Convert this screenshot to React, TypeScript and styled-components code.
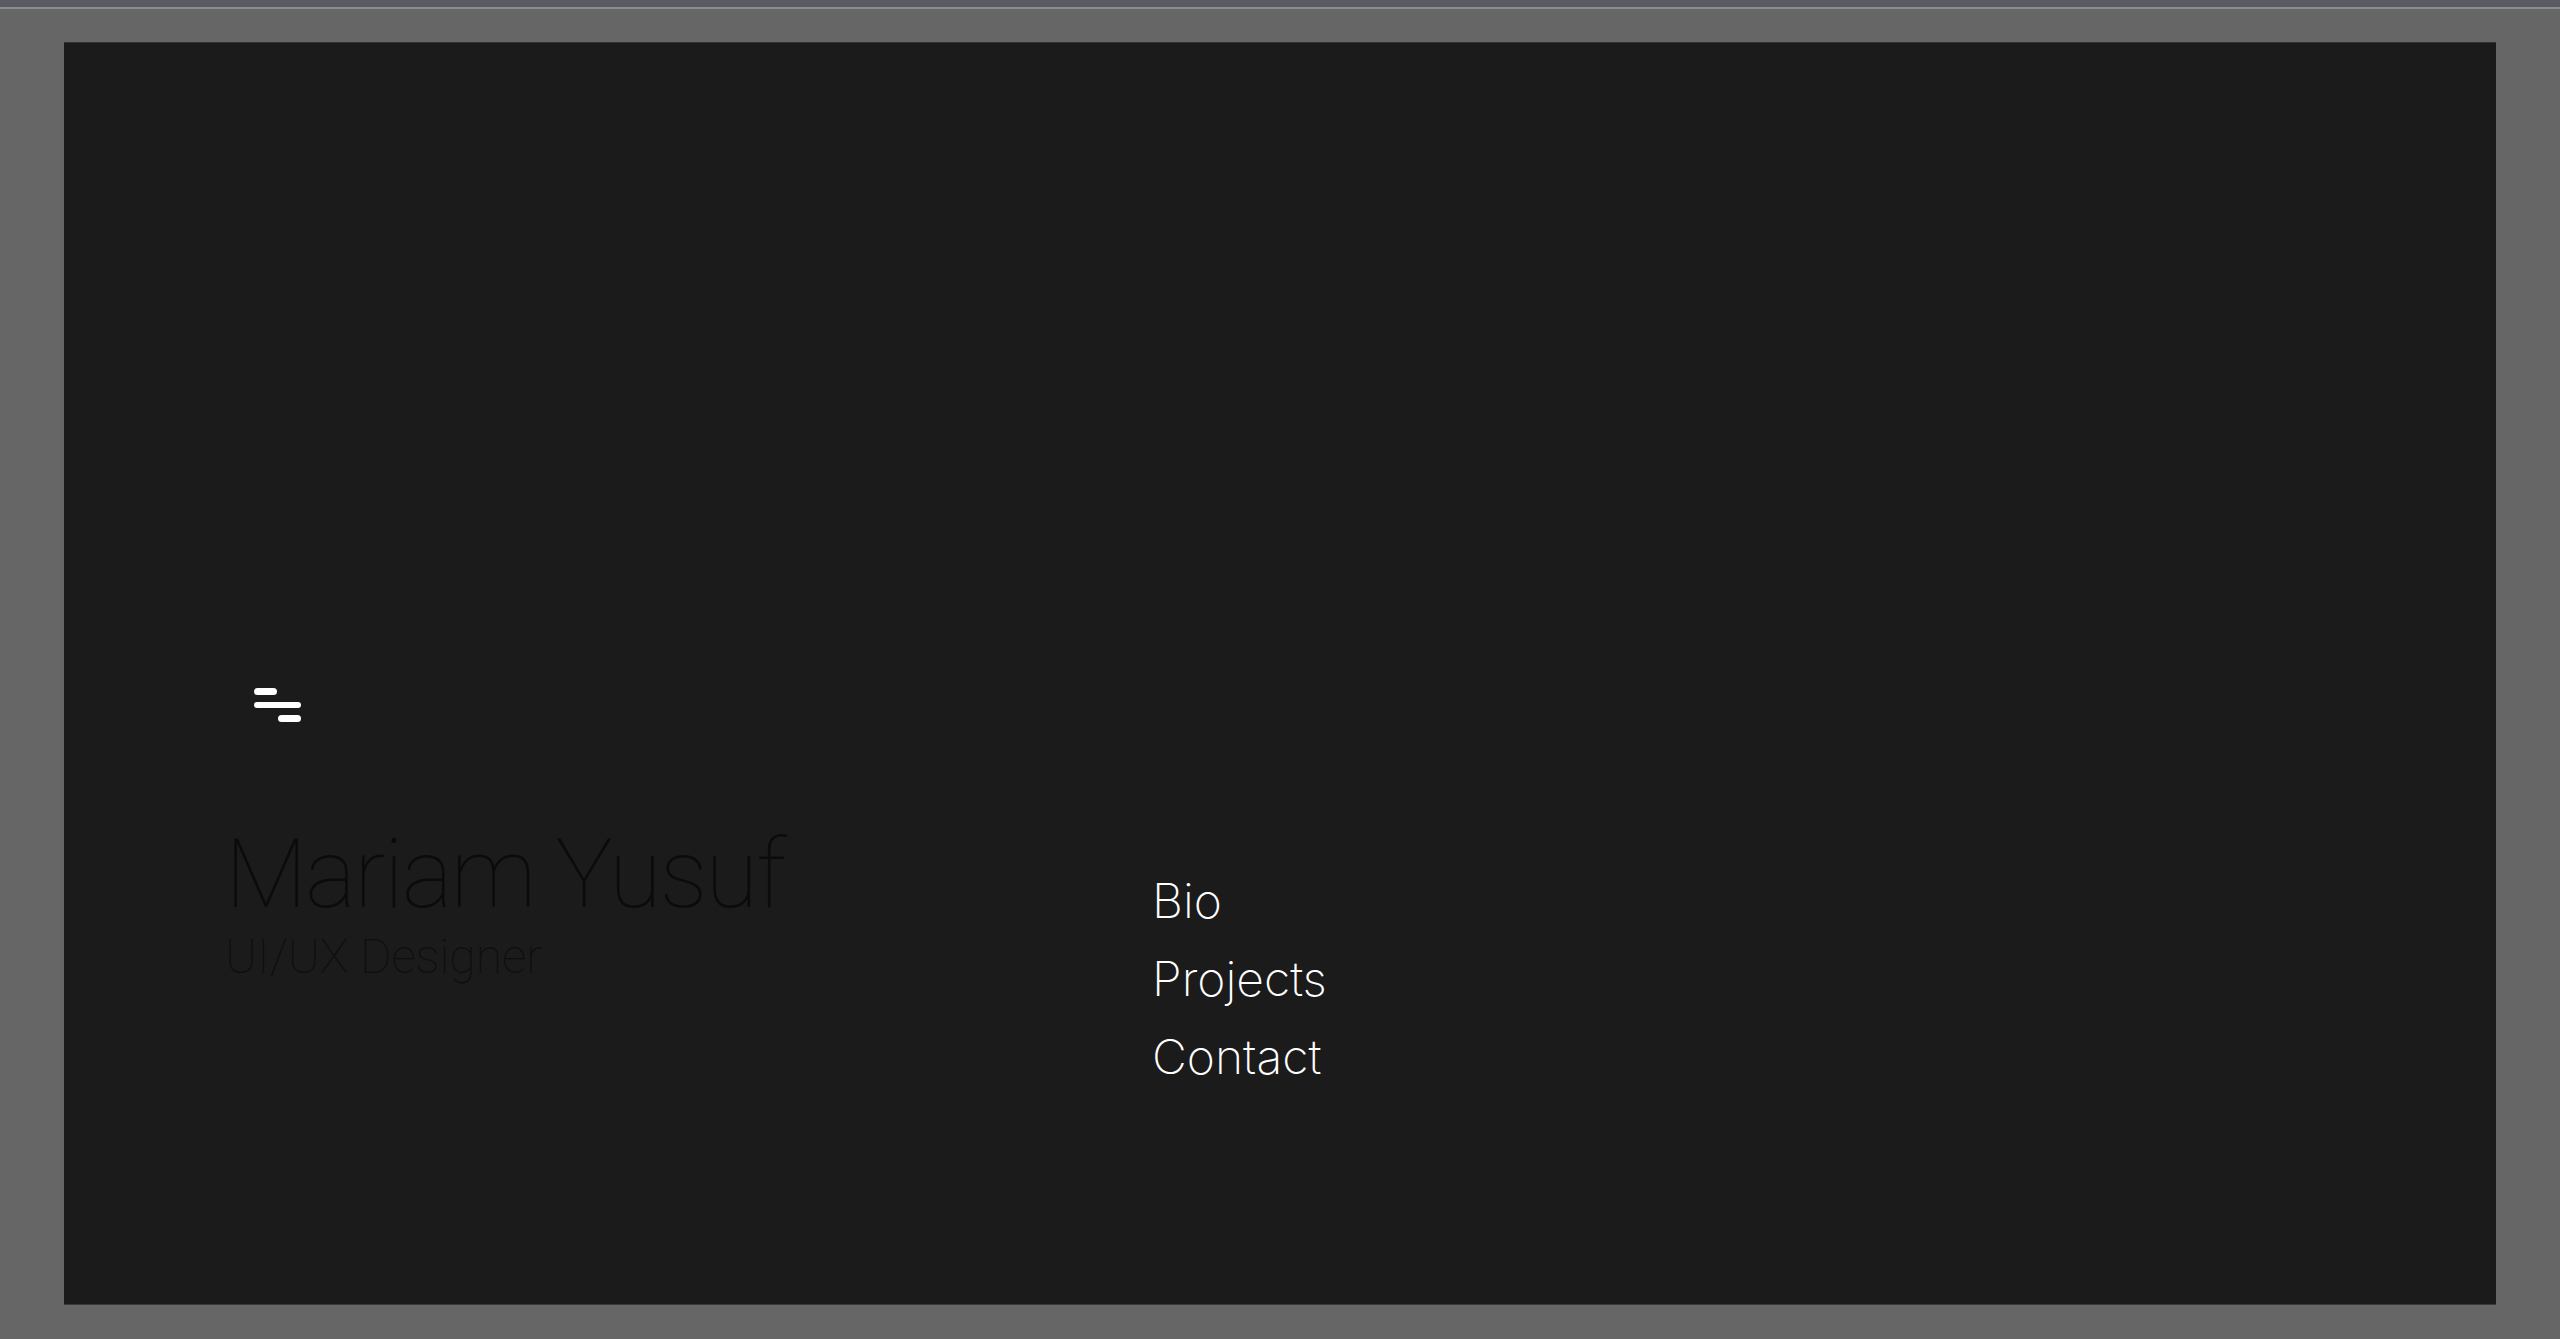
import styled, { createGlobalStyle } from 'styled-components';

const GlobalStyle = createGlobalStyle`
  html, body {
    margin: 0;
    padding: 0;
    background: #666666;
  }
  body {
    font-family: Roboto, "Noto Sans", sans-serif;
  }
`;

// Page frame
const Page = styled.div`
  min-height: 1339px;
  display: flex;
  flex-direction: column;
  background: #666666;
`;

const TopStrip = styled.div`
  height: 7px;
  background: #5a5b62;
  border-bottom: 2px solid #8b8c92;
`;

const Stage = styled.div`
  flex: 1;
  display: flex;
  padding: 33px 64px 34px;
`;

const Panel = styled.main`
  flex: 1;
  background: #1b1b1b;
  border-top: 1px solid #333333;
  border-bottom: 1px solid #3a3a3a;
  padding: 645px 0 0 156px;
  box-sizing: border-box;
`;

const MenuButton = styled.button`
  display: flex;
  flex-direction: column;
  gap: 7px;
  width: 47px;
  margin-left: 34px;
  padding: 0;
  border: none;
  background: none;
  cursor: pointer;
`;

const Bar = styled.span<{ $w: number; $right?: boolean }>`
  display: block;
  height: 6.5px;
  width: ${(p) => p.$w}px;
  border-radius: 4px;
  background: #ffffff;
  align-self: ${(p) => (p.$right ? 'flex-end' : 'flex-start')};
`;

const Content = styled.div`
  display: flex;
  align-items: flex-start;
  margin-top: 97px;
`;

const Intro = styled.div`
  width: 927px;
  padding-left: 5px;
  color: #0b0b0b;
`;

const Name = styled.h1`
  margin: 0;
  font-family: Roboto, sans-serif;
  font-weight: 100;
  font-size: 96px;
  line-height: 110px;
  letter-spacing: -2px;
`;

const Role = styled.p`
  margin: 0;
  font-family: Roboto, sans-serif;
  font-weight: 100;
  font-size: 48px;
  line-height: 56px;
  color: #0e0e0e;
`;

const Nav = styled.nav`
  display: flex;
  flex-direction: column;
  margin-top: 43px;
`;

const NavLink = styled.a`
  font-family: Inter, Roboto, sans-serif;
  font-weight: 200;
  font-size: 48px;
  line-height: 78px;
  color: #ffffff;
  text-decoration: none;
`;

export default function App() {
  return (
    <>
      <GlobalStyle />
      <Page>
        <TopStrip />
        <Stage>
          <Panel>
            <MenuButton aria-label="menu">
              <Bar $w={23} />
              <Bar $w={47} />
              <Bar $w={23} $right />
            </MenuButton>
            <Content>
              <Intro>
                <Name>Mariam Yusuf</Name>
                <Role>UI/UX Designer</Role>
              </Intro>
              <Nav>
                <NavLink href="#bio">Bio</NavLink>
                <NavLink href="#projects">Projects</NavLink>
                <NavLink href="#contact">Contact</NavLink>
              </Nav>
            </Content>
          </Panel>
        </Stage>
      </Page>
    </>
  );
}
